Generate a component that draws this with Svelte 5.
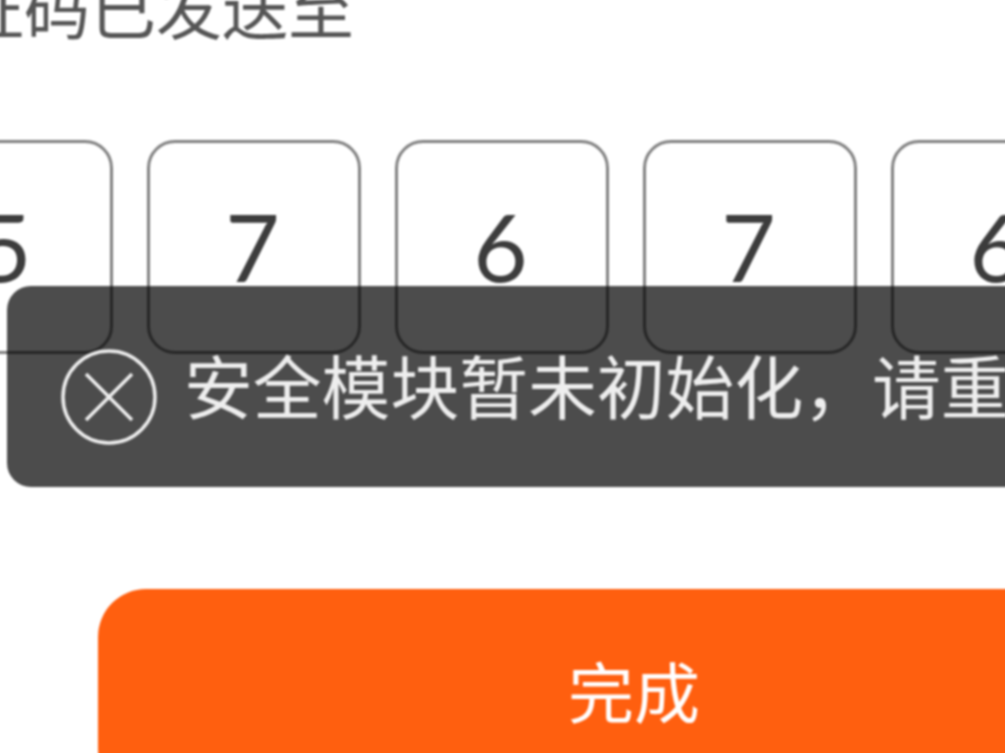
<script>
  const digits = ['5', '7', '6', '7', '6'];
</script>

<div class="page">
  <div class="canvas">
    <div class="content">
      <p class="hint">验证码已发送至</p>
      <div class="codes">
        {#each digits as d}
          <div class="box"><span class="digit">{d}</span></div>
        {/each}
      </div>
      <button class="done"><span class="label">完成</span></button>
    </div>
    <div class="toast">
      <svg class="icon" viewBox="0 0 98 98" aria-hidden="true">
        <circle cx="49" cy="49" r="46" />
        <path d="M26 26 L72 72 M72 26 L26 72" />
      </svg>
      <span class="msg">安全模块暂未初始化，请重新进入</span>
    </div>
  </div>
</div>

<style>
  :global(body) {
    margin: 0;
    background: #fff;
    overflow: hidden;
  }
  .page {
    width: 1005px;
    height: 753px;
    overflow: hidden;
    background: #fff;
  }
  .canvas {
    position: relative;
    box-sizing: border-box;
    width: 1025px;
    height: 773px;
    margin: -10px 0 0 -10px;
    padding: 10px;
    overflow: hidden;
    background: #fff;
    font-family: "Noto Sans CJK SC", "Lato", sans-serif;
    filter: blur(1px);
  }
  .content {
    width: 1300px;
    margin-left: -108px;
    display: flex;
    flex-direction: column;
    align-items: flex-start;
  }
  .hint {
    margin: -41px 0 0;
    height: 181px;
    font-size: 66px;
    line-height: 92px;
    font-weight: 400;
    color: #555;
    white-space: nowrap;
  }
  .codes {
    display: flex;
    gap: 34px;
    margin-left: 7px;
  }
  .box {
    box-sizing: border-box;
    flex: none;
    width: 214px;
    height: 214px;
    border: 3px solid #808080;
    border-radius: 28px;
    display: flex;
    align-items: center;
    justify-content: center;
    font-family: "Lato", sans-serif;
    font-weight: 400;
    font-size: 94px;
    line-height: 1;
    color: #3c3c3c;
  }
  .digit {
    margin-top: -2px;
    margin-right: 3px;
  }
  .done {
    box-sizing: border-box;
    margin: 235px 0 0 206px;
    width: 1072px;
    height: 208px;
    border: 0;
    border-radius: 48px;
    background: #ff5f0f;
    color: #fff;
    font: 400 66px/1 "Noto Sans CJK SC", sans-serif;
  }
  .label {
    display: block;
    margin-top: -8px;
  }
  .toast {
    position: absolute;
    left: 17px;
    top: 296px;
    width: 1100px;
    height: 201px;
    box-sizing: border-box;
    padding-left: 53px;
    display: flex;
    align-items: center;
    gap: 26px;
    background: rgba(0, 0, 0, 0.7);
    border-radius: 24px;
    color: #fff;
    white-space: nowrap;
  }
  .icon {
    flex: none;
    width: 98px;
    height: 98px;
    margin-top: 20px;
    fill: none;
    stroke: #eee;
    stroke-width: 3.5px;
  }
  .msg {
    font-size: 68.8px;
    line-height: 92px;
    font-weight: 400;
    margin-top: -5px;
    color: #eee;
  }
</style>
